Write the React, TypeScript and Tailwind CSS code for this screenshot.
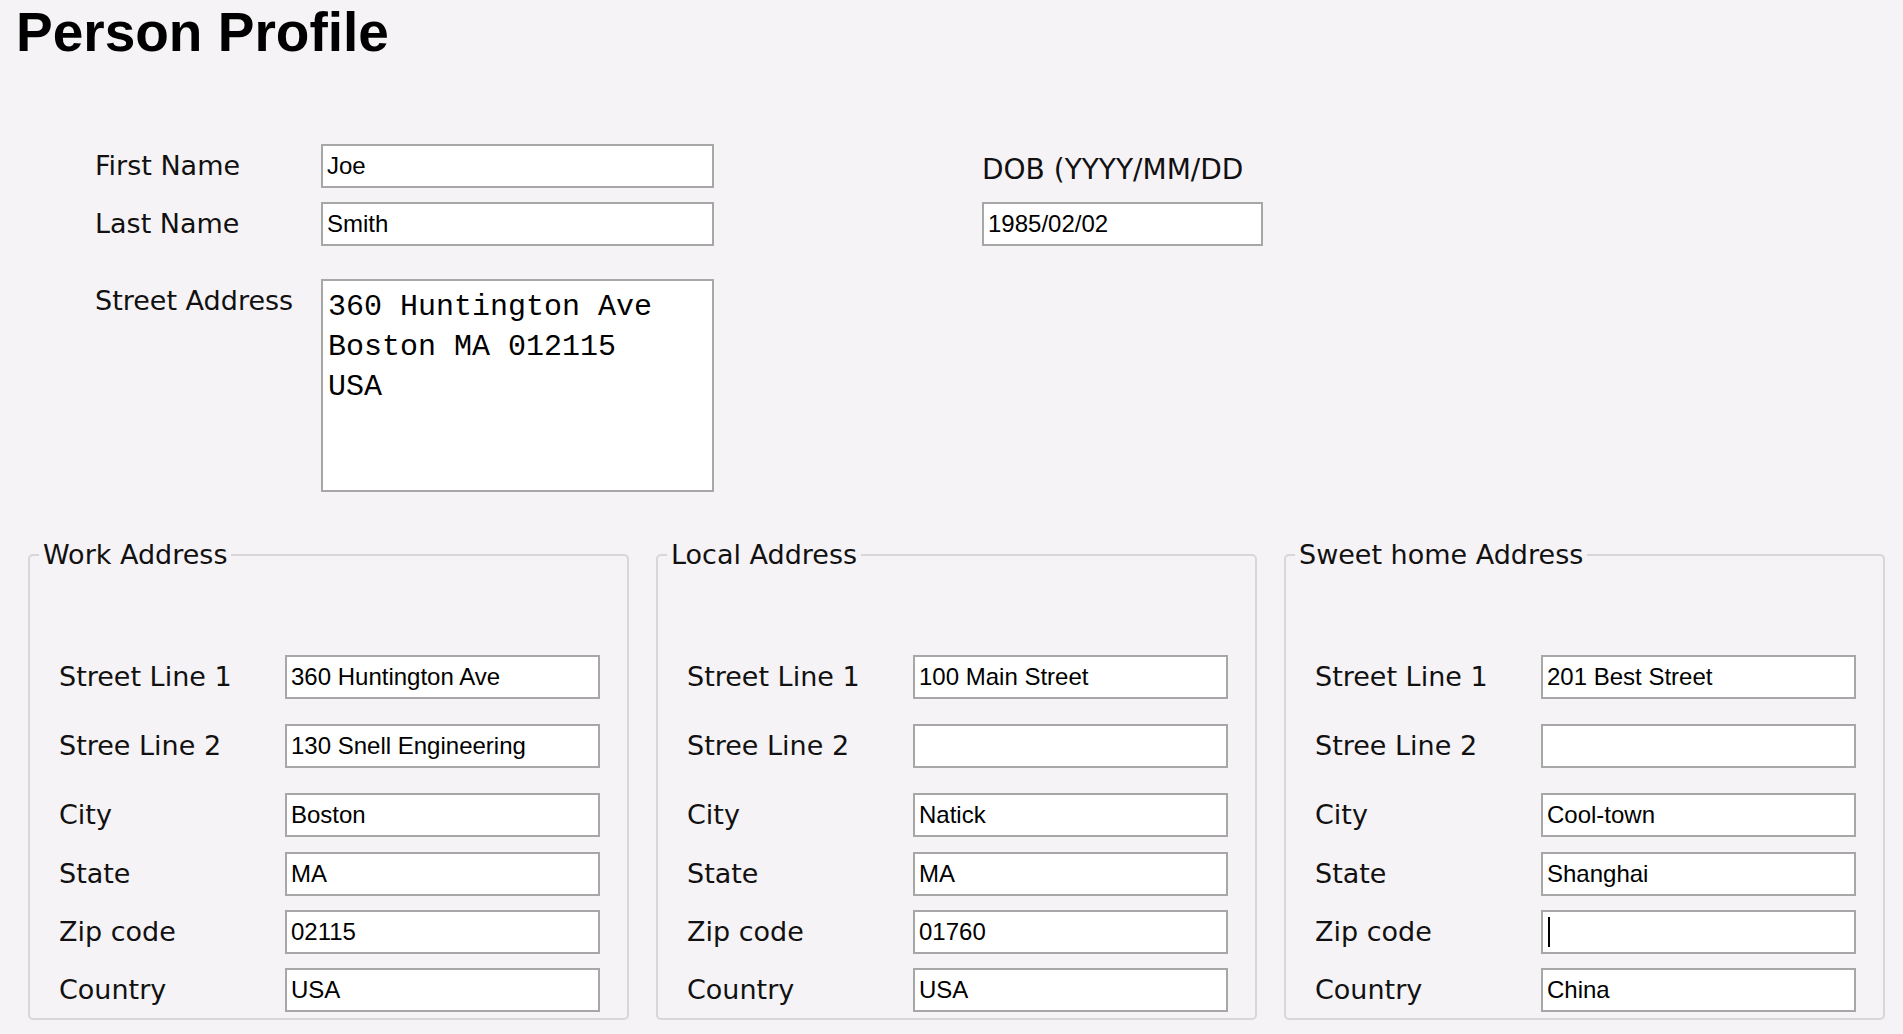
import React from "react";

const fieldLabels = ["Street Line 1", "Stree Line 2", "City", "State", "Zip code", "Country"];
const rowGaps = ["", "mt-[25px]", "mt-[25px]", "mt-[15px]", "mt-[14px]", "mt-[14px]"];

const groups = [
  {
    title: "Work Address",
    values: ["360 Huntington Ave", "130 Snell Engineering", "Boston", "MA", "02115", "USA"],
    caretAt: -1,
  },
  {
    title: "Local Address",
    values: ["100 Main Street", "", "Natick", "MA", "01760", "USA"],
    caretAt: -1,
  },
  {
    title: "Sweet home Address",
    values: ["201 Best Street", "", "Cool-town", "Shanghai", "", "China"],
    caretAt: 4,
  },
];

const inputCls =
  "h-[44px] border-2 border-[#a7a7a7] bg-white px-[4px] text-[24px] text-black font-['Liberation_Sans',Arial,sans-serif] outline-none";

function TextField({ value, className = "" }: { value: string; className?: string }) {
  return <input type="text" defaultValue={value} className={`${inputCls} ${className}`} />;
}

function AddressGroup({ title, values, caretAt }: { title: string; values: string[]; caretAt: number }) {
  return (
    <fieldset className="w-[601px] rounded-[5px] border-2 border-[#d6d6db]">
      <legend className="ml-[9px] px-[4px] text-[27px] leading-[32px] text-[#111]">{title}</legend>
      <div className="pl-[29px] pr-[27px] pt-[84px] pb-[6px]">
        {fieldLabels.map((label, i) => (
          <div key={label} className={`flex items-start ${rowGaps[i]}`}>
            <span className="w-[226px] text-[27px] leading-[44px] text-[#111]">{label}</span>
            <div className="relative">
              <TextField value={values[i]} className="w-[315px]" />
              {caretAt === i && (
                <span className="absolute left-[7px] top-[7px] h-[30px] w-[2px] bg-black" />
              )}
            </div>
          </div>
        ))}
      </div>
    </fieldset>
  );
}

export default function App() {
  return (
    <div className="min-h-screen bg-[#f6f3f6] font-['DejaVu_Sans',Verdana,sans-serif] text-[#111]">
      <h1 className="pl-[16px] pt-[5px] font-['Liberation_Sans',Arial,sans-serif] text-[55px] font-bold leading-none text-black">
        Person Profile
      </h1>

      <div className="mt-[84px] flex pl-[95px]">
        <div className="grid grid-cols-[226px_393px] gap-y-[14px]">
          <span className="text-[27px] leading-[44px]">First Name</span>
          <TextField value="Joe" className="w-[393px]" />
          <span className="text-[27px] leading-[44px]">Last Name</span>
          <TextField value="Smith" className="w-[393px]" />
          <span className="mt-[19px] text-[27px] leading-[44px]">Street Address</span>
          <textarea
            defaultValue={"360 Huntington Ave\nBoston MA 012115\nUSA"}
            className="mt-[19px] h-[213px] w-[393px] resize-none border-2 border-[#a7a7a7] bg-white px-[5px] pt-[6px] font-['Liberation_Mono','Courier_New',monospace] text-[30px] leading-[40px] text-black outline-none"
          />
        </div>
        <div className="ml-[268px] flex flex-col">
          <span className="mb-[10px] pt-[4px] text-[28px] leading-[44px]">DOB (YYYY/MM/DD</span>
          <TextField value="1985/02/02" className="w-[281px]" />
        </div>
      </div>

      <div className="mt-[47px] flex gap-[27px] pl-[28px]">
        {groups.map((g) => (
          <AddressGroup key={g.title} title={g.title} values={g.values} caretAt={g.caretAt} />
        ))}
      </div>
    </div>
  );
}
